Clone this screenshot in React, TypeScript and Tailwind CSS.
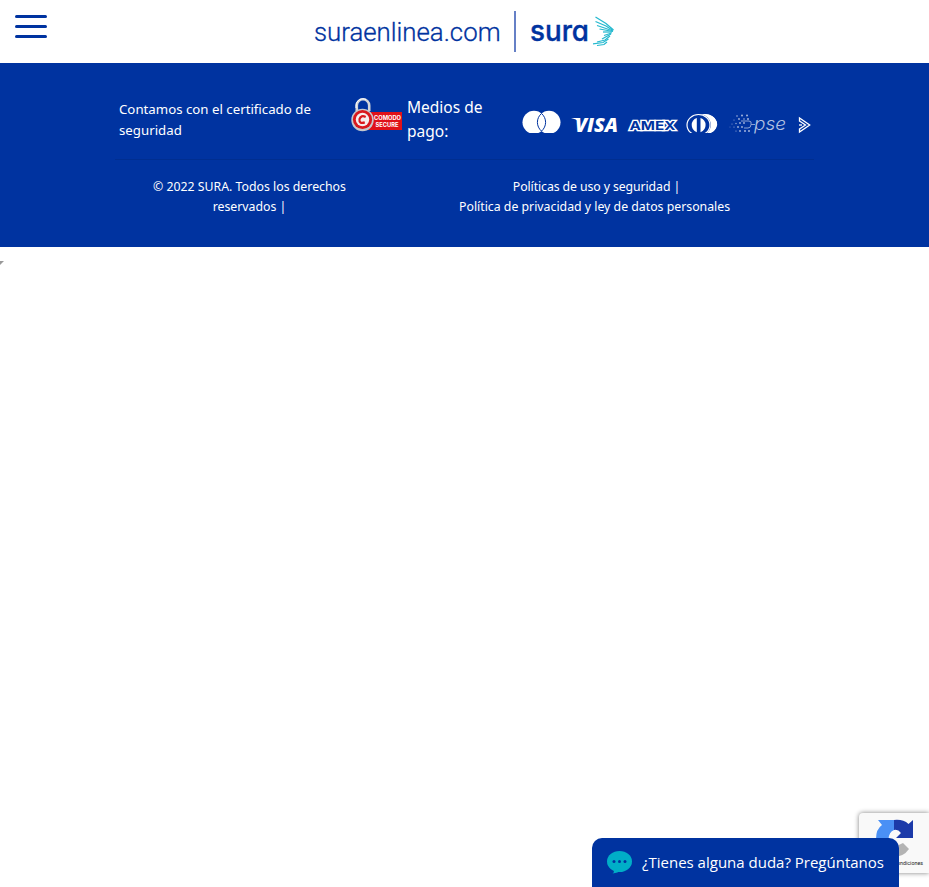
function BrandLogo() {
  return (
    <svg width="304" height="46" viewBox="313 8 304 46" role="img" aria-label="suraenlinea.com sura">
      <text x="314" y="41.300" textLength="186.500" lengthAdjust="spacingAndGlyphs" fill="#0033a0" className="font-['Roboto'] text-[25.500px] font-light" stroke="#0033a0" strokeWidth="0.3">suraenlinea.com</text>
      <path d="M515 11v41" stroke="#6680c6" strokeWidth="2" />
      <text x="530" y="41" textLength="59" lengthAdjust="spacingAndGlyphs" fill="#0033a0" stroke="#0033a0" strokeWidth="0.4" className="font-['Inter'] text-[29px] font-medium [font-feature-settings:'cv11']">sura</text>
      <g stroke="#25b9cf" strokeWidth="1.250" fill="none">
        <path d="M595.500 17L606 23.500L613.500 30" />
        <path d="M595.500 21.500L606 26L613 30.500" />
        <path d="M597 25.500L606 28.500L613 31" />
        <path d="M599.500 29L613 31.500" />
        <path d="M603 32L612 32" />
        <path d="M604 35.500L611.500 33" />
        <path d="M602 39L611 34" />
        <path d="M597 42L605 40L610 36" />
        <path d="M593 43.800L603 42.500L608.500 39" />
        <path d="M597 45.500L604 44.500L607 42" />
      </g>
    </svg>
  );
}

function ComodoBadge() {
  return (
    <svg width="51" height="35" viewBox="351 97 51 35" role="img" aria-label="Comodo Secure">
      <path d="M356.800 111v-5.500a6.200 6.200 0 0 1 12.400 0v5.500" fill="none" stroke="#d3d6da" strokeWidth="2.600" />
      <path d="M356 108v-3a7 7 0 0 1 10-5.500" fill="none" stroke="#fff" strokeWidth="1" />
      <rect x="366" y="112" width="36" height="18" fill="#df1119" />
      <circle cx="362.500" cy="120" r="11.200" fill="#c4c8cd" />
      <circle cx="362.500" cy="119.500" r="9.600" fill="#d9181d" />
      <circle cx="362.500" cy="119.500" r="6.700" fill="#f5eeee" />
      <path d="M365.700 117Q361 114.700 359.500 119.200Q358.800 124.200 364.800 122.400" fill="none" stroke="#d9181d" strokeWidth="2.200" />
      <text x="374" y="119.800" textLength="27" lengthAdjust="spacingAndGlyphs" fill="#fff" className="font-['Inter'] text-[5.500px] font-bold">COMODO</text>
      <text x="375.500" y="126.700" textLength="23" lengthAdjust="spacingAndGlyphs" fill="#fff" className="font-['Inter'] text-[6px] font-bold">SECURE</text>
    </svg>
  );
}

const pseDots: [number, number, number][] = [
  [737, 116, 0.8], [742, 115.500, 1], [747, 115.500, 1],
  [734, 120, 0.5], [739, 119, 0.9], [744, 119, 0.8], [748, 119, 1],
  [732, 124, 0.5], [736, 123.500, 0.7], [740, 123, 0.9], [744, 123, 0.9],
  [730, 127, 0.4], [734, 127, 0.6], [738, 127, 0.9], [742, 127, 0.9],
  [736, 131, 0.6], [740, 131, 0.9], [745, 131, 1], [749, 131, 1],
];

function PaymentLogos() {
  return (
    <svg width="292" height="26" viewBox="521 110 292 26" role="img" aria-label="Mastercard, Visa, Amex, Diners, PSE">
      <circle cx="534" cy="122.300" r="11.500" fill="#fff" />
      <circle cx="549" cy="122.300" r="11.500" fill="#fff" />
      <path d="M541.500 113.500a11.500 11.500 0 0 1 0 17.600a11.500 11.500 0 0 1 0-17.600z" fill="#fff" stroke="#0033a0" strokeWidth="1" />
      <path d="M522 133.500h39" stroke="#0033a0" strokeWidth="1.200" />
      <text x="575" y="132" textLength="43" lengthAdjust="spacingAndGlyphs" fill="#fff" className="font-['Open_Sans'] text-[19.500px] font-extrabold italic">VISA</text>
      <path d="M571 118h6.500l1.500 4q-2.500-3-8-4z" fill="#fff" />
      <text x="629.500" y="129.500" textLength="46" lengthAdjust="spacingAndGlyphs" fill="#0033a0" stroke="#fff" strokeWidth="2.600" paintOrder="stroke" className="font-['Inter'] text-[12px] font-bold">AMEX</text>
      <path d="M700 114h4a12.800 10 0 0 1 6 19h-10z" fill="#fff" />
      <path d="M697 114h8a11.700 10.300 0 0 1 0 20.600h-8z" fill="#fff" />
      <ellipse cx="698.500" cy="125" rx="12.300" ry="11" fill="#0033a0" />
      <ellipse cx="698.500" cy="125" rx="11.500" ry="10.500" fill="none" stroke="#fff" strokeWidth="1.200" />
      <path d="M696.800 118a7.500 7.500 0 0 0 0 14.200zM700.500 118a7.500 7.500 0 0 1 0 14.200z" fill="#fff" />
      <path d="M684 134.500h34" stroke="#0033a0" strokeWidth="3" />
      <g fill="#a3b5dc">
        {pseDots.map(([x, y, r]) => <circle key={`${x}-${y}`} cx={x} cy={y} r={r} />)}
      </g>
      <path d="M741 121h8q3 0 2 3.500h4M744 128h4q3 0 3-3.500" fill="none" stroke="#8ba2d3" strokeWidth="1" />
      <text x="754" y="130" textLength="32" lengthAdjust="spacingAndGlyphs" fill="#b2c1e2" className="font-['Inter'] text-[17.500px] font-light italic">pse</text>
      <g fill="none" stroke="#fff" strokeWidth="1.300">
        <path d="M799.500 121.500v-3.500L809.700 125L799.500 132v-3.500" />
        <path d="M799.500 121L805.500 125L799.500 129" />
        <path d="M799 125h3" />
      </g>
    </svg>
  );
}

function Recaptcha() {
  return (
    <div className="absolute top-[813px] right-0 h-[60px] w-[70px] overflow-hidden rounded-l-sm bg-[#f9f9f9] shadow-[0_0_5px_gray]">
      <svg width="70" height="60" viewBox="859 813 70 60">
        <path d="M894 820V830Q889 832 888.500 839H876Q876 829 882 825L878 820Z" fill="#4a90f5" />
        <path d="M894 820Q903 819 908.500 824L913 820V838H896L901 833Q898 829 894 830Z" fill="#1c3aa9" />
        <path d="M888 850L903 843L909 849Q903 858 890 857Z" fill="#b3b3b3" />
        <text x="897" y="865" textLength="26" lengthAdjust="spacingAndGlyphs" fill="#222" className="font-['Roboto'] text-[5.500px]">ondiciones</text>
      </svg>
    </div>
  );
}

export default function App() {
  return (
    <div className="relative h-[887px] w-full overflow-hidden bg-white font-['Noto_Sans',sans-serif]">
      <header className="flex h-[63px] items-start">
        <button aria-label="Menú" className="mt-[15px] ml-[15px] flex w-8 flex-col gap-[7px]">
          <span className="h-[3px] w-full rounded-sm bg-[#0033a0]" />
          <span className="h-[3px] w-full rounded-sm bg-[#0033a0]" />
          <span className="h-[3px] w-full rounded-sm bg-[#0033a0]" />
        </button>
        <div className="mt-2 ml-[266px]"><BrandLogo /></div>
      </header>
      <footer className="h-[184px] bg-[#0033a0] pl-[119px] text-white">
        <div className="flex h-24 items-start">
          <p className="mt-9 w-[232px] shrink-0 text-[13.250px] leading-[21px] whitespace-nowrap">Contamos con el certificado de<br />seguridad</p>
          <div className="mt-[34px] shrink-0"><ComodoBadge /></div>
          <p className="mt-8 ml-[5px] w-[114px] shrink-0 text-[15.500px] leading-6 whitespace-nowrap">Medios de<br />pago:</p>
          <div className="mt-[47px] shrink-0"><PaymentLogos /></div>
        </div>
        <hr className="mr-[115px] -ml-1 border-[#002e90]" />
        <div className="flex pt-[17px] text-center text-[12.300px] leading-5 whitespace-nowrap">
          <p className="w-[261px]">© 2022 SURA. Todos los derechos<br />reservados |</p>
          <p className="ml-[79px] w-[270px]"><span className="ml-[5px] tracking-[-0.1px]">Políticas de uso y seguridad&nbsp;|</span><br />Política de privacidad y ley de datos personales</p>
        </div>
      </footer>
      <svg className="mt-[14px]" width="5" height="5"><path d="M0 0h4L0 4z" fill="#999" /></svg>
      <Recaptcha />
      <button className="absolute right-[30px] bottom-0 flex h-[49px] w-[307px] items-center rounded-t-[10px] bg-[#0033a0] pl-[14px] font-['Open_Sans',sans-serif] text-[15px] whitespace-nowrap text-white">
        <svg width="27" height="25" viewBox="606 850 27 25">
          <ellipse cx="619.500" cy="861.500" rx="12.500" ry="10.500" fill="#00aec7" />
          <path d="M613 869Q615 872 612.500 873.500Q618 873 621 870z" fill="#00aec7" />
          <g fill="#0033a0"><circle cx="614" cy="861.500" r="1.500" /><circle cx="619.500" cy="861.500" r="1.500" /><circle cx="625" cy="861.500" r="1.500" /></g>
        </svg>
        <span className="ml-[9px]">¿Tienes alguna duda? Pregúntanos</span>
      </button>
    </div>
  );
}
